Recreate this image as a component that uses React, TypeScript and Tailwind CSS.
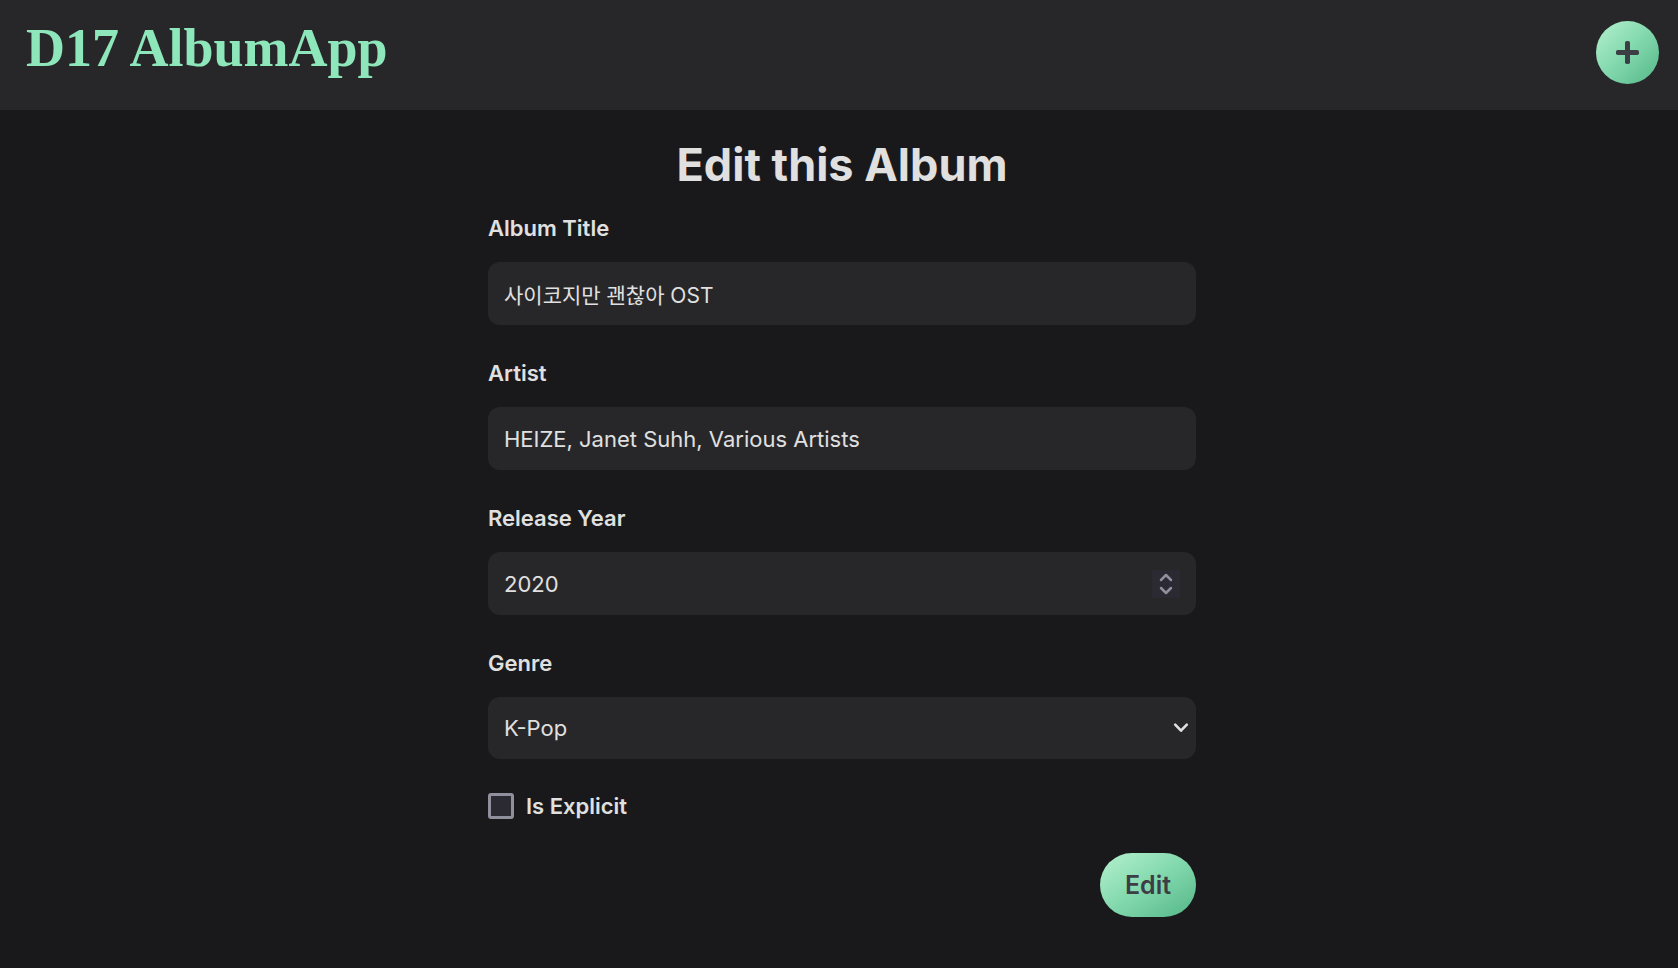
import { useId, useState } from "react";
import type { ReactNode } from "react";

const genres = ["K-Pop", "Pop", "Rock", "Hip-Hop", "Jazz", "Classical"];

const controlClass =
  "block w-full appearance-none rounded-xl border-0 bg-[#272729] px-4 leading-8 text-[#e0e0e0] outline-none focus-visible:ring-2 focus-visible:ring-[#8ee6bb]";

const accentClass =
  "bg-linear-to-br from-[#b4f1ce] via-[#82d8ad] to-[#53b788] text-[#3d3d46] cursor-pointer";

function Field({ id, label, children }: { id: string; label: string; children: ReactNode }) {
  return (
    <div className="flex flex-col gap-[18px]">
      <label htmlFor={id} className="text-[22px] leading-8 font-semibold">
        {label}
      </label>
      {children}
    </div>
  );
}

function StepButton({ label, path, onClick }: { label: string; path: string; onClick: () => void }) {
  return (
    <button
      type="button"
      aria-label={label}
      onClick={onClick}
      className="h-[14px] w-7 bg-[#2b2a33] text-[#8f8f9d]"
    >
      <svg viewBox="0 0 28 14" className="block h-[14px] w-7" aria-hidden="true">
        <path
          d={path}
          fill="none"
          stroke="currentColor"
          strokeWidth="2.5"
          strokeLinecap="round"
          strokeLinejoin="round"
        />
      </svg>
    </button>
  );
}

function Header() {
  return (
    <header className="flex items-start justify-between bg-[#272729] pt-[21px] pr-[19px] pb-[26px] pl-[26px]">
      <a
        href="#"
        className="font-['Georgia','Liberation_Serif',serif] text-[54px] leading-[54px] font-bold text-[#8ee6bb]"
      >
        D17 AlbumApp
      </a>
      <button
        type="button"
        aria-label="Add album"
        className={`flex size-[63px] items-center justify-center rounded-full ${accentClass}`}
      >
        <svg viewBox="0 0 23 23" className="size-[23px]" fill="currentColor" aria-hidden="true">
          <rect x="9" y="0" width="5" height="23" rx="1.8" />
          <rect x="0" y="9" width="23" height="5" rx="1.8" />
        </svg>
      </button>
    </header>
  );
}

export default function App() {
  const id = useId();
  const [title, setTitle] = useState("사이코지만 괜찮아 OST");
  const [artist, setArtist] = useState("HEIZE, Janet Suhh, Various Artists");
  const [year, setYear] = useState(2020);
  const [genre, setGenre] = useState("K-Pop");
  const [explicit, setExplicit] = useState(false);

  return (
    <div className="min-h-screen bg-[#19191b] font-['Inter','Noto_Sans_CJK_KR',sans-serif] text-[#e0e0e0]">
      <Header />
      <main className="pt-[25px] pb-12 pl-[6px]">
        <form
          className="mx-auto flex max-w-[708px] flex-col"
          onSubmit={(event) => event.preventDefault()}
        >
          <h1 className="text-center text-[45px] leading-[60px] font-bold">Edit this Album</h1>

          <div className="mt-[17px] flex flex-col gap-8">
            <Field id={`${id}-title`} label="Album Title">
              <input
                id={`${id}-title`}
                type="text"
                value={title}
                onChange={(event) => setTitle(event.target.value)}
                className={`${controlClass} h-[63px] text-[21px]`}
              />
            </Field>

            <Field id={`${id}-artist`} label="Artist">
              <input
                id={`${id}-artist`}
                type="text"
                value={artist}
                onChange={(event) => setArtist(event.target.value)}
                className={`${controlClass} h-[63px] text-[22px]`}
              />
            </Field>

            <Field id={`${id}-year`} label="Release Year">
              <div className="relative">
                <input
                  id={`${id}-year`}
                  type="number"
                  value={year}
                  onChange={(event) => setYear(Number(event.target.value))}
                  className={`${controlClass} h-[63px] text-[22px] [appearance:textfield] [&::-webkit-inner-spin-button]:appearance-none`}
                />
                <div className="absolute inset-y-0 right-4 flex flex-col justify-center">
                  <StepButton
                    label="Increase year"
                    path="M9 10l5-5 5 5"
                    onClick={() => setYear(year + 1)}
                  />
                  <StepButton
                    label="Decrease year"
                    path="M9 4l5 5 5-5"
                    onClick={() => setYear(year - 1)}
                  />
                </div>
              </div>
            </Field>

            <Field id={`${id}-genre`} label="Genre">
              <div className="relative">
                <select
                  id={`${id}-genre`}
                  value={genre}
                  onChange={(event) => setGenre(event.target.value)}
                  className={`${controlClass} h-[62px] text-[22px]`}
                >
                  {genres.map((name) => (
                    <option key={name}>{name}</option>
                  ))}
                </select>
                <svg
                  viewBox="0 0 16 16"
                  className="pointer-events-none absolute top-[23px] right-[7px] size-4"
                  aria-hidden="true"
                >
                  <path
                    d="M2.2 4.7l5.8 6 5.8-6"
                    fill="none"
                    stroke="currentColor"
                    strokeWidth="2.6"
                    strokeLinecap="round"
                    strokeLinejoin="round"
                  />
                </svg>
              </div>
            </Field>
          </div>

          <div className="mt-[31px] flex items-center gap-3">
            <input
              id={`${id}-explicit`}
              type="checkbox"
              checked={explicit}
              onChange={(event) => setExplicit(event.target.checked)}
              className="size-[26px] appearance-none rounded-[3px] border-3 border-[#8f8f9d] bg-[#2b2a33] checked:bg-[#8ee6bb]"
            />
            <label htmlFor={`${id}-explicit`} className="text-[22px] leading-8 font-semibold">
              Is Explicit
            </label>
          </div>

          <button
            type="submit"
            className={`mt-[31px] h-16 self-end rounded-full px-[25px] text-[25px] leading-8 font-semibold ${accentClass}`}
          >
            Edit
          </button>
        </form>
      </main>
    </div>
  );
}
